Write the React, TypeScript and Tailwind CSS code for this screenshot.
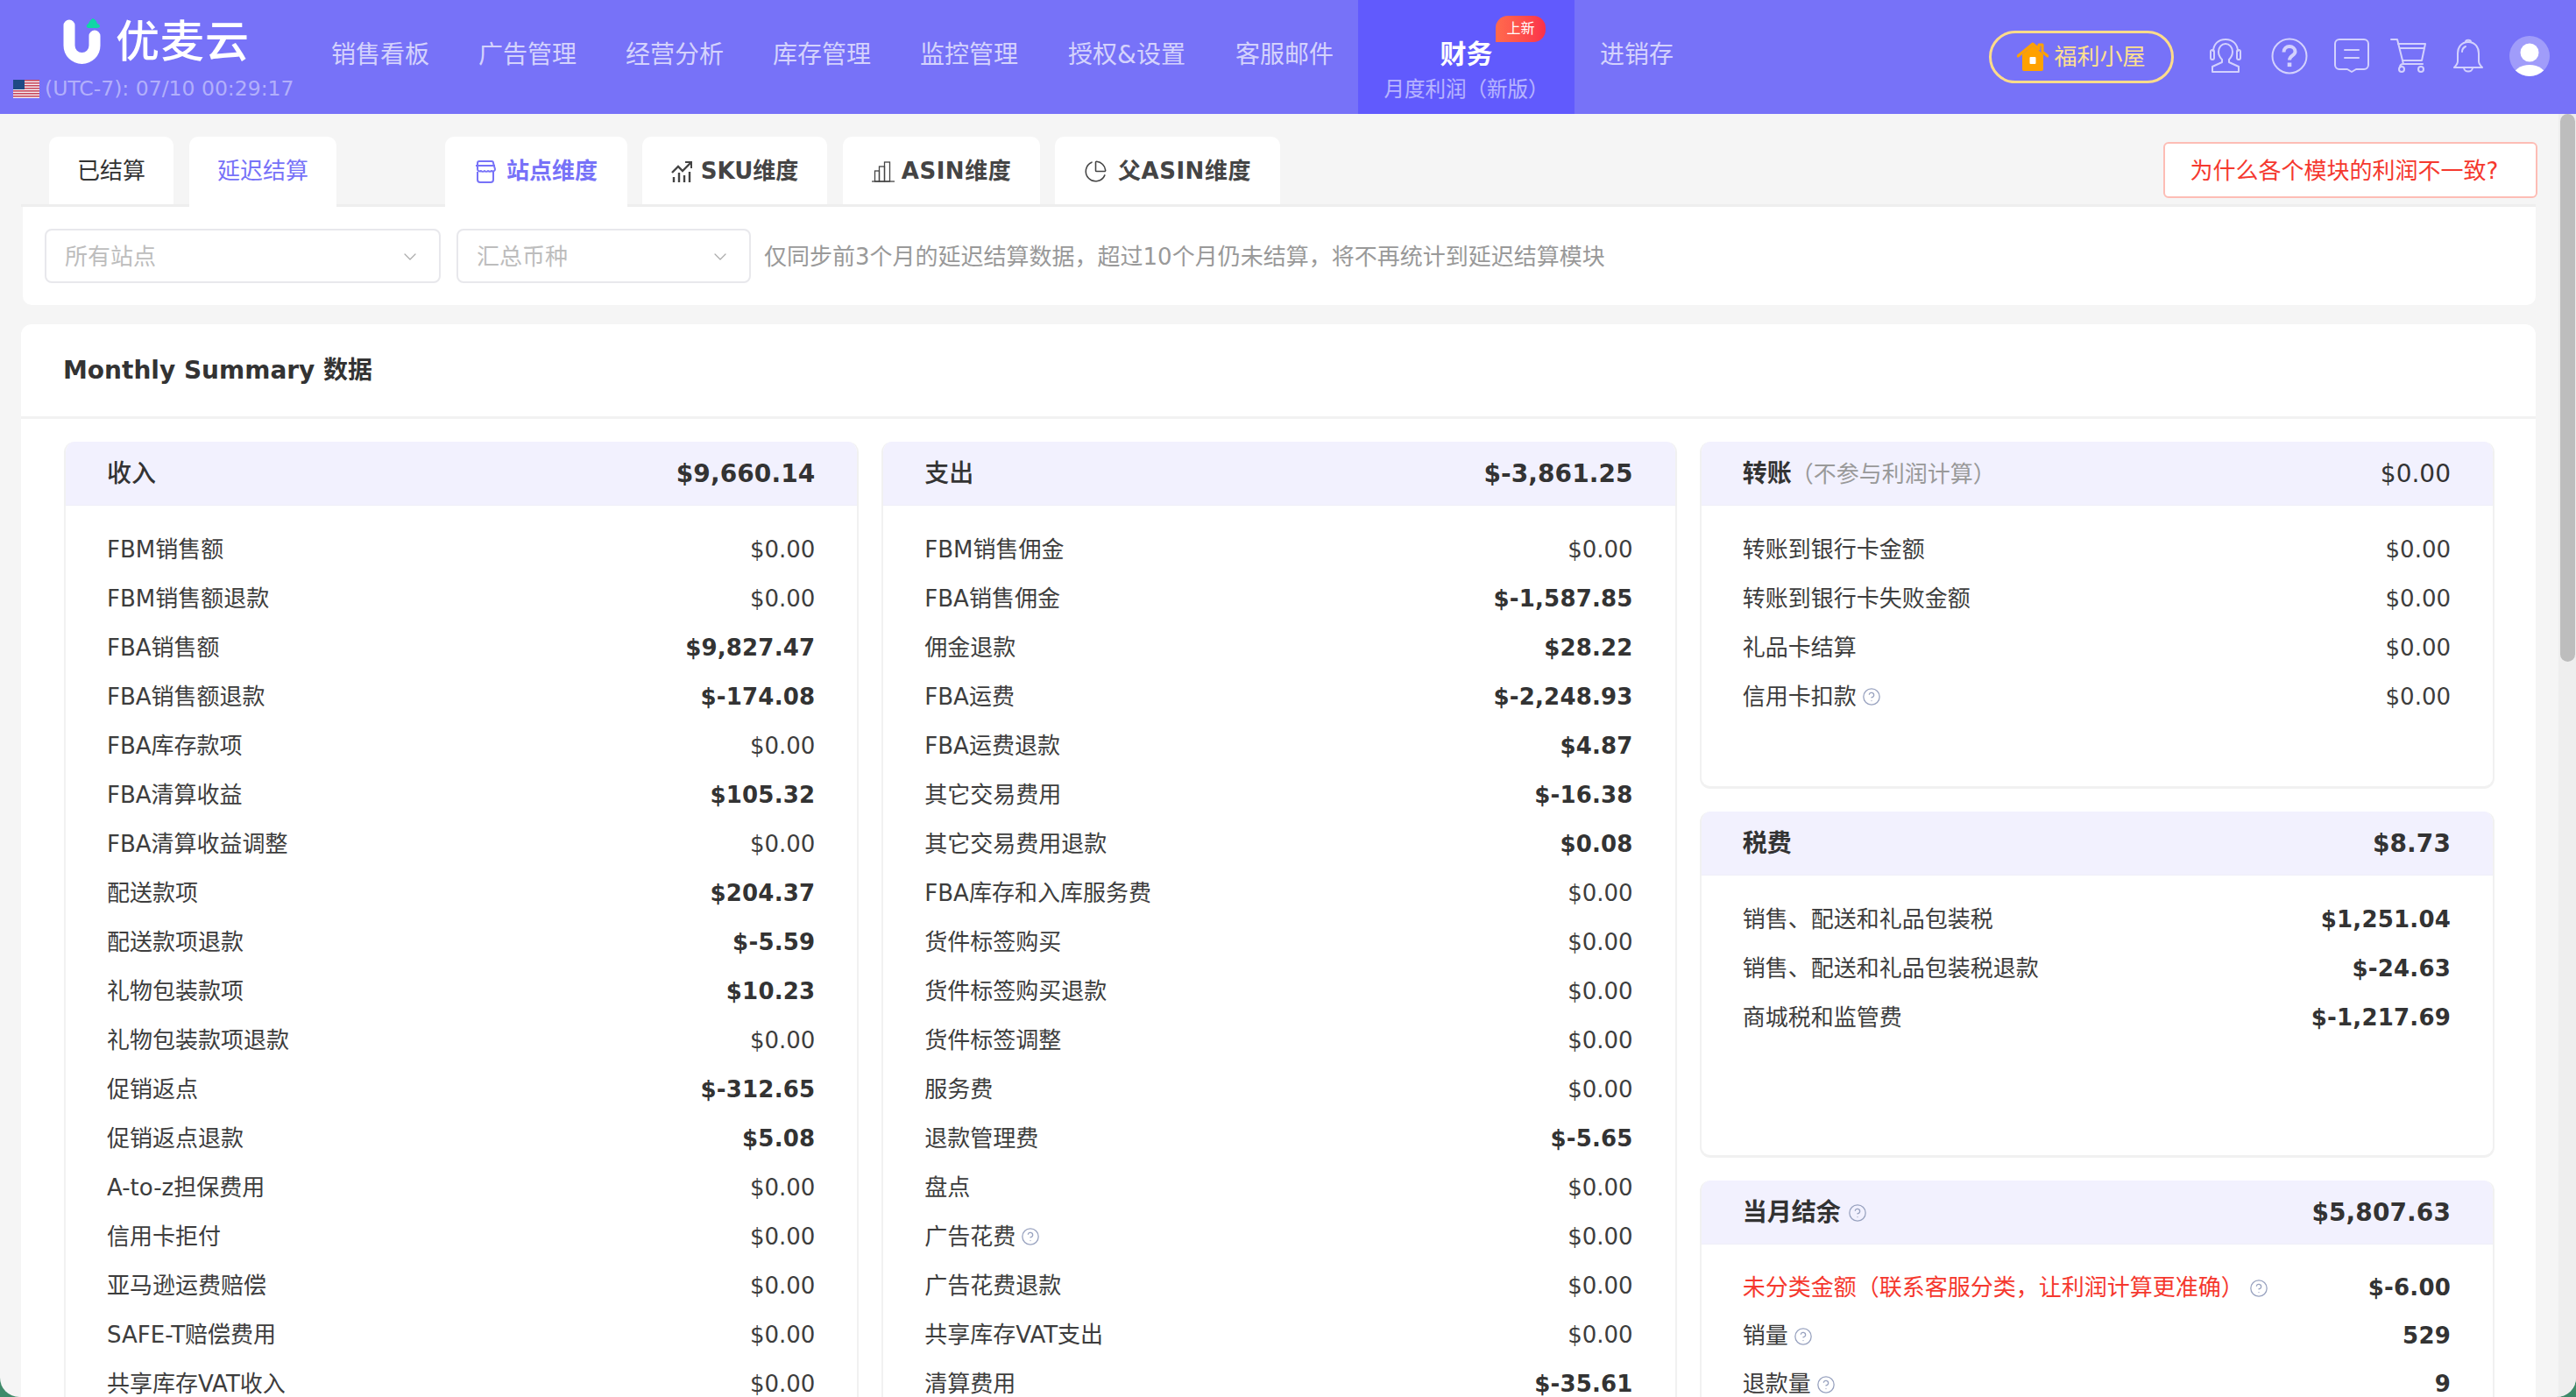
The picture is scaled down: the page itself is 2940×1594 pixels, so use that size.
import { ChevronDown, ChartPie, CircleHelp } from 'lucide-react'

type Row = { label: string; value: string; bold?: boolean; help?: boolean; red?: boolean }

const NAV = ['销售看板', '广告管理', '经营分析', '库存管理', '监控管理', '授权&设置', '客服邮件']

const INCOME: Row[] = [
  { label: 'FBM销售额', value: '$0.00' },
  { label: 'FBM销售额退款', value: '$0.00' },
  { label: 'FBA销售额', value: '$9,827.47', bold: true },
  { label: 'FBA销售额退款', value: '$-174.08', bold: true },
  { label: 'FBA库存款项', value: '$0.00' },
  { label: 'FBA清算收益', value: '$105.32', bold: true },
  { label: 'FBA清算收益调整', value: '$0.00' },
  { label: '配送款项', value: '$204.37', bold: true },
  { label: '配送款项退款', value: '$-5.59', bold: true },
  { label: '礼物包装款项', value: '$10.23', bold: true },
  { label: '礼物包装款项退款', value: '$0.00' },
  { label: '促销返点', value: '$-312.65', bold: true },
  { label: '促销返点退款', value: '$5.08', bold: true },
  { label: 'A-to-z担保费用', value: '$0.00' },
  { label: '信用卡拒付', value: '$0.00' },
  { label: '亚马逊运费赔偿', value: '$0.00' },
  { label: 'SAFE-T赔偿费用', value: '$0.00' },
  { label: '共享库存VAT收入', value: '$0.00' },
]

const EXPENSE: Row[] = [
  { label: 'FBM销售佣金', value: '$0.00' },
  { label: 'FBA销售佣金', value: '$-1,587.85', bold: true },
  { label: '佣金退款', value: '$28.22', bold: true },
  { label: 'FBA运费', value: '$-2,248.93', bold: true },
  { label: 'FBA运费退款', value: '$4.87', bold: true },
  { label: '其它交易费用', value: '$-16.38', bold: true },
  { label: '其它交易费用退款', value: '$0.08', bold: true },
  { label: 'FBA库存和入库服务费', value: '$0.00' },
  { label: '货件标签购买', value: '$0.00' },
  { label: '货件标签购买退款', value: '$0.00' },
  { label: '货件标签调整', value: '$0.00' },
  { label: '服务费', value: '$0.00' },
  { label: '退款管理费', value: '$-5.65', bold: true },
  { label: '盘点', value: '$0.00' },
  { label: '广告花费', value: '$0.00', help: true },
  { label: '广告花费退款', value: '$0.00' },
  { label: '共享库存VAT支出', value: '$0.00' },
  { label: '清算费用', value: '$-35.61', bold: true },
]

const TRANSFER: Row[] = [
  { label: '转账到银行卡金额', value: '$0.00' },
  { label: '转账到银行卡失败金额', value: '$0.00' },
  { label: '礼品卡结算', value: '$0.00' },
  { label: '信用卡扣款', value: '$0.00', help: true },
]

const TAX: Row[] = [
  { label: '销售、配送和礼品包装税', value: '$1,251.04', bold: true },
  { label: '销售、配送和礼品包装税退款', value: '$-24.63', bold: true },
  { label: '商城税和监管费', value: '$-1,217.69', bold: true },
]

const BALANCE: Row[] = [
  { label: '未分类金额（联系客服分类，让利润计算更准确）', value: '$-6.00', bold: true, help: true, red: true },
  { label: '销量', value: '529', bold: true, help: true },
  { label: '退款量', value: '9', bold: true, help: true },
]

function Help() {
  return <CircleHelp size={22} strokeWidth={1.4} className="text-[#98a2bf] shrink-0" />
}

function Logo() {
  return (
    <svg width="46" height="54" viewBox="0 0 46 54" fill="none">
      <path d="M7 8V31a14.500 14.500 0 0 0 29 0V20" stroke="#fff" strokeWidth="13" strokeLinecap="round" />
      <path d="M29 12c-3 0-3-4 0-5 1-3 3-5 5-6 3 1 4 3 5 6 4 1 4 5 0 5z" fill="#10d6a6" transform="translate(0 -1)" />
    </svg>
  )
}

function Flag() {
  return (
    <svg width="30" height="21" viewBox="0 0 30 21">
      <rect width="30" height="21" fill="#f4f0f4" />
      {[0, 3, 6, 9, 12, 15, 18].map(y => (
        <rect key={y} y={y} width="30" height="1.6" fill="#c8485c" />
      ))}
      <rect width="13" height="11" fill="#1f4a85" />
    </svg>
  )
}

function Headset() {
  return (
    <svg width="36" height="40" viewBox="0 0 36 40" fill="none" stroke="#d3d1fd" strokeWidth="2" strokeLinejoin="round">
      <path d="M10 15c0-5 3.500-9 8-9s8 4 8 9c0 4-2 7-4 9v3l11 5v6H3v-6l11-5v-3c-2-2-4-5-4-9z" />
      <path d="M4 15C4 6 10 1 18 1s14 5 14 14" />
      <rect x="1" y="13" width="4" height="11" rx="2" />
      <rect x="31" y="13" width="4" height="11" rx="2" />
    </svg>
  )
}

function HelpNav() {
  return (
    <svg width="42" height="42" viewBox="0 0 42 42" fill="none" stroke="#d3d1fd">
      <circle cx="21" cy="21" r="19.500" strokeWidth="2" />
      <path d="M14.500 16.500c0-4 3-6.500 6.500-6.500s6.500 2.400 6.500 6c0 4.500-6.500 4.500-6.500 9.500" strokeWidth="4" />
      <rect x="18.700" y="28.500" width="4.600" height="4.600" fill="#d3d1fd" stroke="none" />
    </svg>
  )
}

function Message() {
  return (
    <svg width="40" height="40" viewBox="0 0 40 40" fill="none" stroke="#d3d1fd" strokeWidth="2" strokeLinejoin="round">
      <path d="M6 1h28a5 5 0 0 1 5 5v24a5 5 0 0 1-5 5h-9l-5 3-5-3H6a5 5 0 0 1-5-5V6a5 5 0 0 1 5-5z" />
      <path d="M12 13h16M12 22h16" strokeLinecap="round" />
    </svg>
  )
}

function Cart() {
  return (
    <svg width="42" height="40" viewBox="0 0 42 40" fill="none" stroke="#d3d1fd" strokeWidth="2" strokeLinejoin="round" strokeLinecap="round">
      <path d="M1 1h7l7 28h22" />
      <path d="M9 6h31l-4 19H14" />
      <path d="M11 11h28" />
      <path d="M15 29c-3 0-4 2-4 4" />
      <circle cx="13" cy="35" r="3" />
      <circle cx="35" cy="35" r="3" />
    </svg>
  )
}

function Bell() {
  return (
    <svg width="34" height="40" viewBox="0 0 34 40" fill="none" stroke="#d3d1fd" strokeWidth="2" strokeLinejoin="round" strokeLinecap="round">
      <path d="M17 4c-8 0-12 6-12 13v9c0 3-2 5-4 7h32c-2-2-4-4-4-7v-9c0-7-4-13-12-13z" />
      <path d="M14 4c0-3 6-3 6 0" />
      <path d="M12 33c0 6 10 6 10 0" />
      <path d="M10 15c0-3 2-5 4-6" />
    </svg>
  )
}

function Avatar() {
  return (
    <svg width="46" height="46" viewBox="0 0 46 46">
      <defs>
        <clipPath id="avatar-clip">
          <circle cx="23" cy="23" r="23" />
        </clipPath>
      </defs>
      <circle cx="23" cy="23" r="23" fill="#fff" fillOpacity="0.3" />
      <circle cx="23" cy="19" r="10.500" fill="#fff" />
      <ellipse cx="23" cy="47" rx="19" ry="14" fill="#fff" clipPath="url(#avatar-clip)" />
    </svg>
  )
}

function HomeIcon() {
  return (
    <svg width="36" height="34" viewBox="0 0 36 34">
      <path d="M6 14v17a2 2 0 0 0 2 2h20a2 2 0 0 0 2-2V14L18 4z" fill="#ffa100" />
      <path d="M1 16 18 2l7 6V3h4v8l6 5" fill="none" stroke="#ffa100" strokeWidth="3" strokeLinecap="round" strokeLinejoin="round" />
      <rect x="14.500" y="17" width="7" height="8" rx="1" fill="#fff" />
    </svg>
  )
}

function StoreIcon() {
  return (
    <svg width="24" height="26" viewBox="0 0 24 26" fill="none" stroke="#7772f8" strokeWidth="2" strokeLinejoin="round">
      <path d="M3 3a2 2 0 0 1 2-2h14a2 2 0 0 1 2 2l2 7c0 2-2 3-4 2-1 1-3 1-4 0-1 1-3 1-4 0-1 1-3 1-4 0-2 1-4 0-4-2z" />
      <path d="M1 6h22" />
      <path d="M3 13v9a3 3 0 0 0 3 3h12a3 3 0 0 0 3-3v-9" />
    </svg>
  )
}

function SkuIcon() {
  return (
    <svg width="24" height="24" viewBox="0 0 24 24" fill="none" stroke="#444" strokeWidth="2.400">
      <path d="M1 13 8 6l5 5 9-9" />
      <path d="M16 1h7v7" strokeWidth="2" />
      <path d="M3 24v-6M9 24V13M15 24v-8M21 24V12" />
    </svg>
  )
}

function AsinIcon() {
  return (
    <svg width="26" height="24" viewBox="0 0 26 24" fill="none" stroke="#444" strokeWidth="1.300">
      <path d="M0 23h26" />
      <rect x="3.500" y="11" width="5" height="12" />
      <rect x="8.500" y="6" width="6" height="17" />
      <rect x="14.500" y="1" width="6" height="22" />
    </svg>
  )
}

function AmountRow({ row, tight }: { row: Row; tight?: boolean }) {
  return (
    <div className={`${tight ? 'h-[55px]' : 'h-[56px]'} flex items-center justify-between`}>
      <div className={`flex items-center gap-[6px] ${row.red ? 'text-[#f5382e]' : 'text-[#3d3d3d]'}`}>
        <span>{row.label}</span>
        {row.help && <Help />}
      </div>
      <span className={row.bold ? 'font-bold tracking-[0.2px] text-[#333]' : 'text-[#3d3d3d]'}>{row.value}</span>
    </div>
  )
}

function SummaryCard({ title, total, boldTotal = true, rows, note, help, tight, mediumTitle, className = '' }: {
  title: string
  total: string
  boldTotal?: boolean
  rows: Row[]
  note?: string
  help?: boolean
  tight?: boolean
  mediumTitle?: boolean
  className?: string
}) {
  return (
    <div className={`border-x-2 border-b-[3px] border-[#f1f1f1] rounded-[12px] overflow-hidden ${className}`}>
      <div className="h-[73px] pt-[2px] bg-[#f2f1fe] border-b border-[#eeeef8] pl-[47px] pr-[48px] flex items-center justify-between text-[28px] text-[#333]">
        <div className="flex items-center gap-[8px]">
          <span className={mediumTitle ? 'font-medium' : 'font-semibold'}>{title}</span>
          {note && <span className="-ml-[9px] text-[26px] text-[#999]">{note}</span>}
          {help && <Help />}
        </div>
        <span className={boldTotal ? 'font-bold tracking-[0.1px]' : ''}>{total}</span>
      </div>
      <div className="pl-[47px] pr-[48px] pt-[22px]">
        {rows.map(r => <AmountRow key={r.label} row={r} tight={tight} />)}
      </div>
    </div>
  )
}

export default function App() {
  return (
    <div className="w-[2940px] h-[1594px] bg-[#3f8a6a] overflow-hidden font-['DejaVu_Sans','Noto_Sans_CJK_SC',sans-serif] text-[26px] text-[#333]">
      <div className="relative w-full h-full rounded-b-[22px] overflow-hidden bg-[#f5f5f5]">

        {/* Top nav */}
        <header className="h-[130px] bg-[#7772f8] flex">
          <div className="w-[350px] shrink-0 pt-[20px]">
            <div className="flex items-center gap-[14px] pl-[72px] h-[56px]">
              <Logo />
              <span className="text-[50px] leading-none font-medium text-white tracking-[1px]">优麦云</span>
            </div>
            <div className="flex items-center gap-[6px] pl-[15px] mt-[14px] text-[23.5px] leading-none text-white/45">
              <Flag />
              <span className="whitespace-nowrap">(UTC-7): 07/10 00:29:17</span>
            </div>
          </div>
          <nav className="flex h-full text-[28px] text-white/70">
            {NAV.map(n => (
              <div key={n} className={`${n === '授权&设置' ? 'px-[29px]' : 'px-[28px]'} pb-[4px] flex items-center whitespace-nowrap`}>{n}</div>
            ))}
            <div className="relative w-[247px] bg-[#615afd] flex flex-col items-center pt-[42px]">
              <span className="text-[30px] leading-[40px] font-semibold text-white">财务</span>
              <span className="mt-[4px] text-[23.5px] leading-[32px] text-white/55 whitespace-nowrap">月度利润（新版）</span>
              <span className="absolute left-[157px] top-[18px] w-[57px] h-[30px] flex items-center justify-center rounded-[14px] rounded-bl-none bg-gradient-to-r from-[#ff6a4d] to-[#fb2f4a] text-[16px] text-white">上新</span>
            </div>
            <div className="px-[29px] pb-[4px] flex items-center">进销存</div>
          </nav>
          <div className="ml-auto flex items-center pr-[30px] pb-[2px]">
            <div className="w-[211px] h-[60px] mr-[41px] mt-[2px] rounded-full border-[3px] border-[#ffdc8a] flex items-center justify-center gap-[6px] text-[26px] text-[#ffe08f]">
              <HomeIcon />
              <span>福利小屋</span>
            </div>
            <Headset />
            <div className="ml-[34px]"><HelpNav /></div>
            <div className="ml-[30px]"><Message /></div>
            <div className="ml-[24px]"><Cart /></div>
            <div className="ml-[30px]"><Bell /></div>
            <div className="ml-[30px]"><Avatar /></div>
          </div>
        </header>

        <div className="flex h-[1464px]">
          <main className="w-[2920px] pl-[24px] pr-[26px] overflow-hidden">

            {/* Tabs */}
            <div className="flex items-end h-[106px] border-b-[3px] border-[#eeeeee] pl-[32px]">
              <div className="w-[142px] h-[77px] pt-[2px] bg-white rounded-t-[10px] flex items-center justify-center">已结算</div>
              <div className="w-[168px] h-[80px] -mb-[3px] ml-[18px] pb-[1px] bg-white rounded-t-[10px] flex items-center justify-center text-[#7772f8]">延迟结算</div>
              <div className="w-[208px] h-[80px] -mb-[3px] ml-[124px] pb-[1px] bg-white rounded-t-[10px] flex items-center justify-center gap-[12px] font-semibold text-[#7772f8]">
                <StoreIcon />
                <span>站点维度</span>
              </div>
              <div className="w-[211px] h-[77px] pt-[2px] ml-[17px] bg-white rounded-t-[10px] flex items-center justify-center gap-[10px] font-semibold text-[#444]">
                <SkuIcon />
                <span>SKU维度</span>
              </div>
              <div className="w-[225px] h-[77px] pt-[2px] ml-[18px] bg-white rounded-t-[10px] flex items-center justify-center gap-[8px] font-semibold text-[#444]">
                <AsinIcon />
                <span className="tracking-[0.5px]">ASIN维度</span>
              </div>
              <div className="w-[257px] h-[77px] pt-[2px] ml-[17px] bg-white rounded-t-[10px] flex items-center justify-center gap-[12px] font-semibold text-[#444]">
                <ChartPie size={27} strokeWidth={1.4} />
                <span className="tracking-[0.5px]">父ASIN维度</span>
              </div>
              <div className="ml-auto -mr-[2px] mb-[7px] w-[427px] h-[64px] pt-[2px] pr-[14px] bg-white rounded-[6px] border-2 border-[#fdbdb5] flex items-center justify-center text-[#f5382e] whitespace-nowrap">
                为什么各个模块的利润不一致?
              </div>
            </div>

            {/* Filters */}
            <div className="h-[112px] ml-[2px] bg-white rounded-b-[10px] flex items-center px-[25px]">
              <div className="w-[452px] h-[62px] pt-[2px] rounded-[8px] border-2 border-[#e8e8ec] px-[21px] flex items-center justify-between text-[#bdbdbd]">
                <span>所有站点</span>
                <ChevronDown size={24} strokeWidth={1.2} className="text-[#aaa]" />
              </div>
              <div className="w-[336px] h-[62px] pt-[2px] ml-[18px] rounded-[8px] border-2 border-[#e8e8ec] px-[21px] flex items-center justify-between text-[#bdbdbd]">
                <span>汇总币种</span>
                <ChevronDown size={24} strokeWidth={1.2} className="text-[#aaa]" />
              </div>
              <span className="ml-[15px] pt-[2px] text-[#999]">仅同步前3个月的延迟结算数据，超过10个月仍未结算，将不再统计到延迟结算模块</span>
            </div>

            {/* Monthly summary */}
            <div className="mt-[22px] bg-white rounded-t-[12px]">
              <div className="h-[108px] pl-[48px] border-b-[3px] border-[#f2f2f2] flex items-center text-[28px] font-bold text-[#333]">
                Monthly Summary 数据
              </div>
              <div className="grid grid-cols-3 gap-[26px] pl-[49px] pr-[47px] pt-[26px]">
                <SummaryCard title="收入" mediumTitle total="$9,660.14" rows={INCOME} />
                <SummaryCard title="支出" mediumTitle total="$-3,861.25" rows={EXPENSE} />
                <div className="flex flex-col gap-[26px]">
                  <SummaryCard title="转账" note="（不参与利润计算）" total="$0.00" boldTotal={false} rows={TRANSFER} className="h-[396px]" />
                  <SummaryCard title="税费" total="$8.73" rows={TAX} className="h-[395px]" />
                  <SummaryCard title="当月结余" help tight total="$5,807.63" rows={BALANCE} />
                </div>
              </div>
            </div>
          </main>

          {/* Scrollbar */}
          <div className="w-[20px] bg-[#eeeeee] flex justify-center">
            <div className="w-[17px] h-[625px] rounded-full bg-[#bdbdbd]" />
          </div>
        </div>

        {/* Watermark */}
        <div className="absolute left-0 top-[130px] right-[20px] bottom-0 overflow-hidden pointer-events-none">
          <div className="absolute -left-[46px] -top-[110px] grid grid-cols-[repeat(21,145px)] auto-rows-[110px]">
            {Array.from({ length: 21 * 15 }, (_, i) => (
              <div
                key={i}
                className={`flex items-center justify-center text-[28px] text-black/[0.012] italic ${(i % 21) % 2 === 1 ? 'translate-y-[15px]' : 'translate-y-[70px]'}`}
              >
                <span className="-rotate-[62deg]">17185</span>
              </div>
            ))}
          </div>
        </div>

      </div>
    </div>
  )
}
